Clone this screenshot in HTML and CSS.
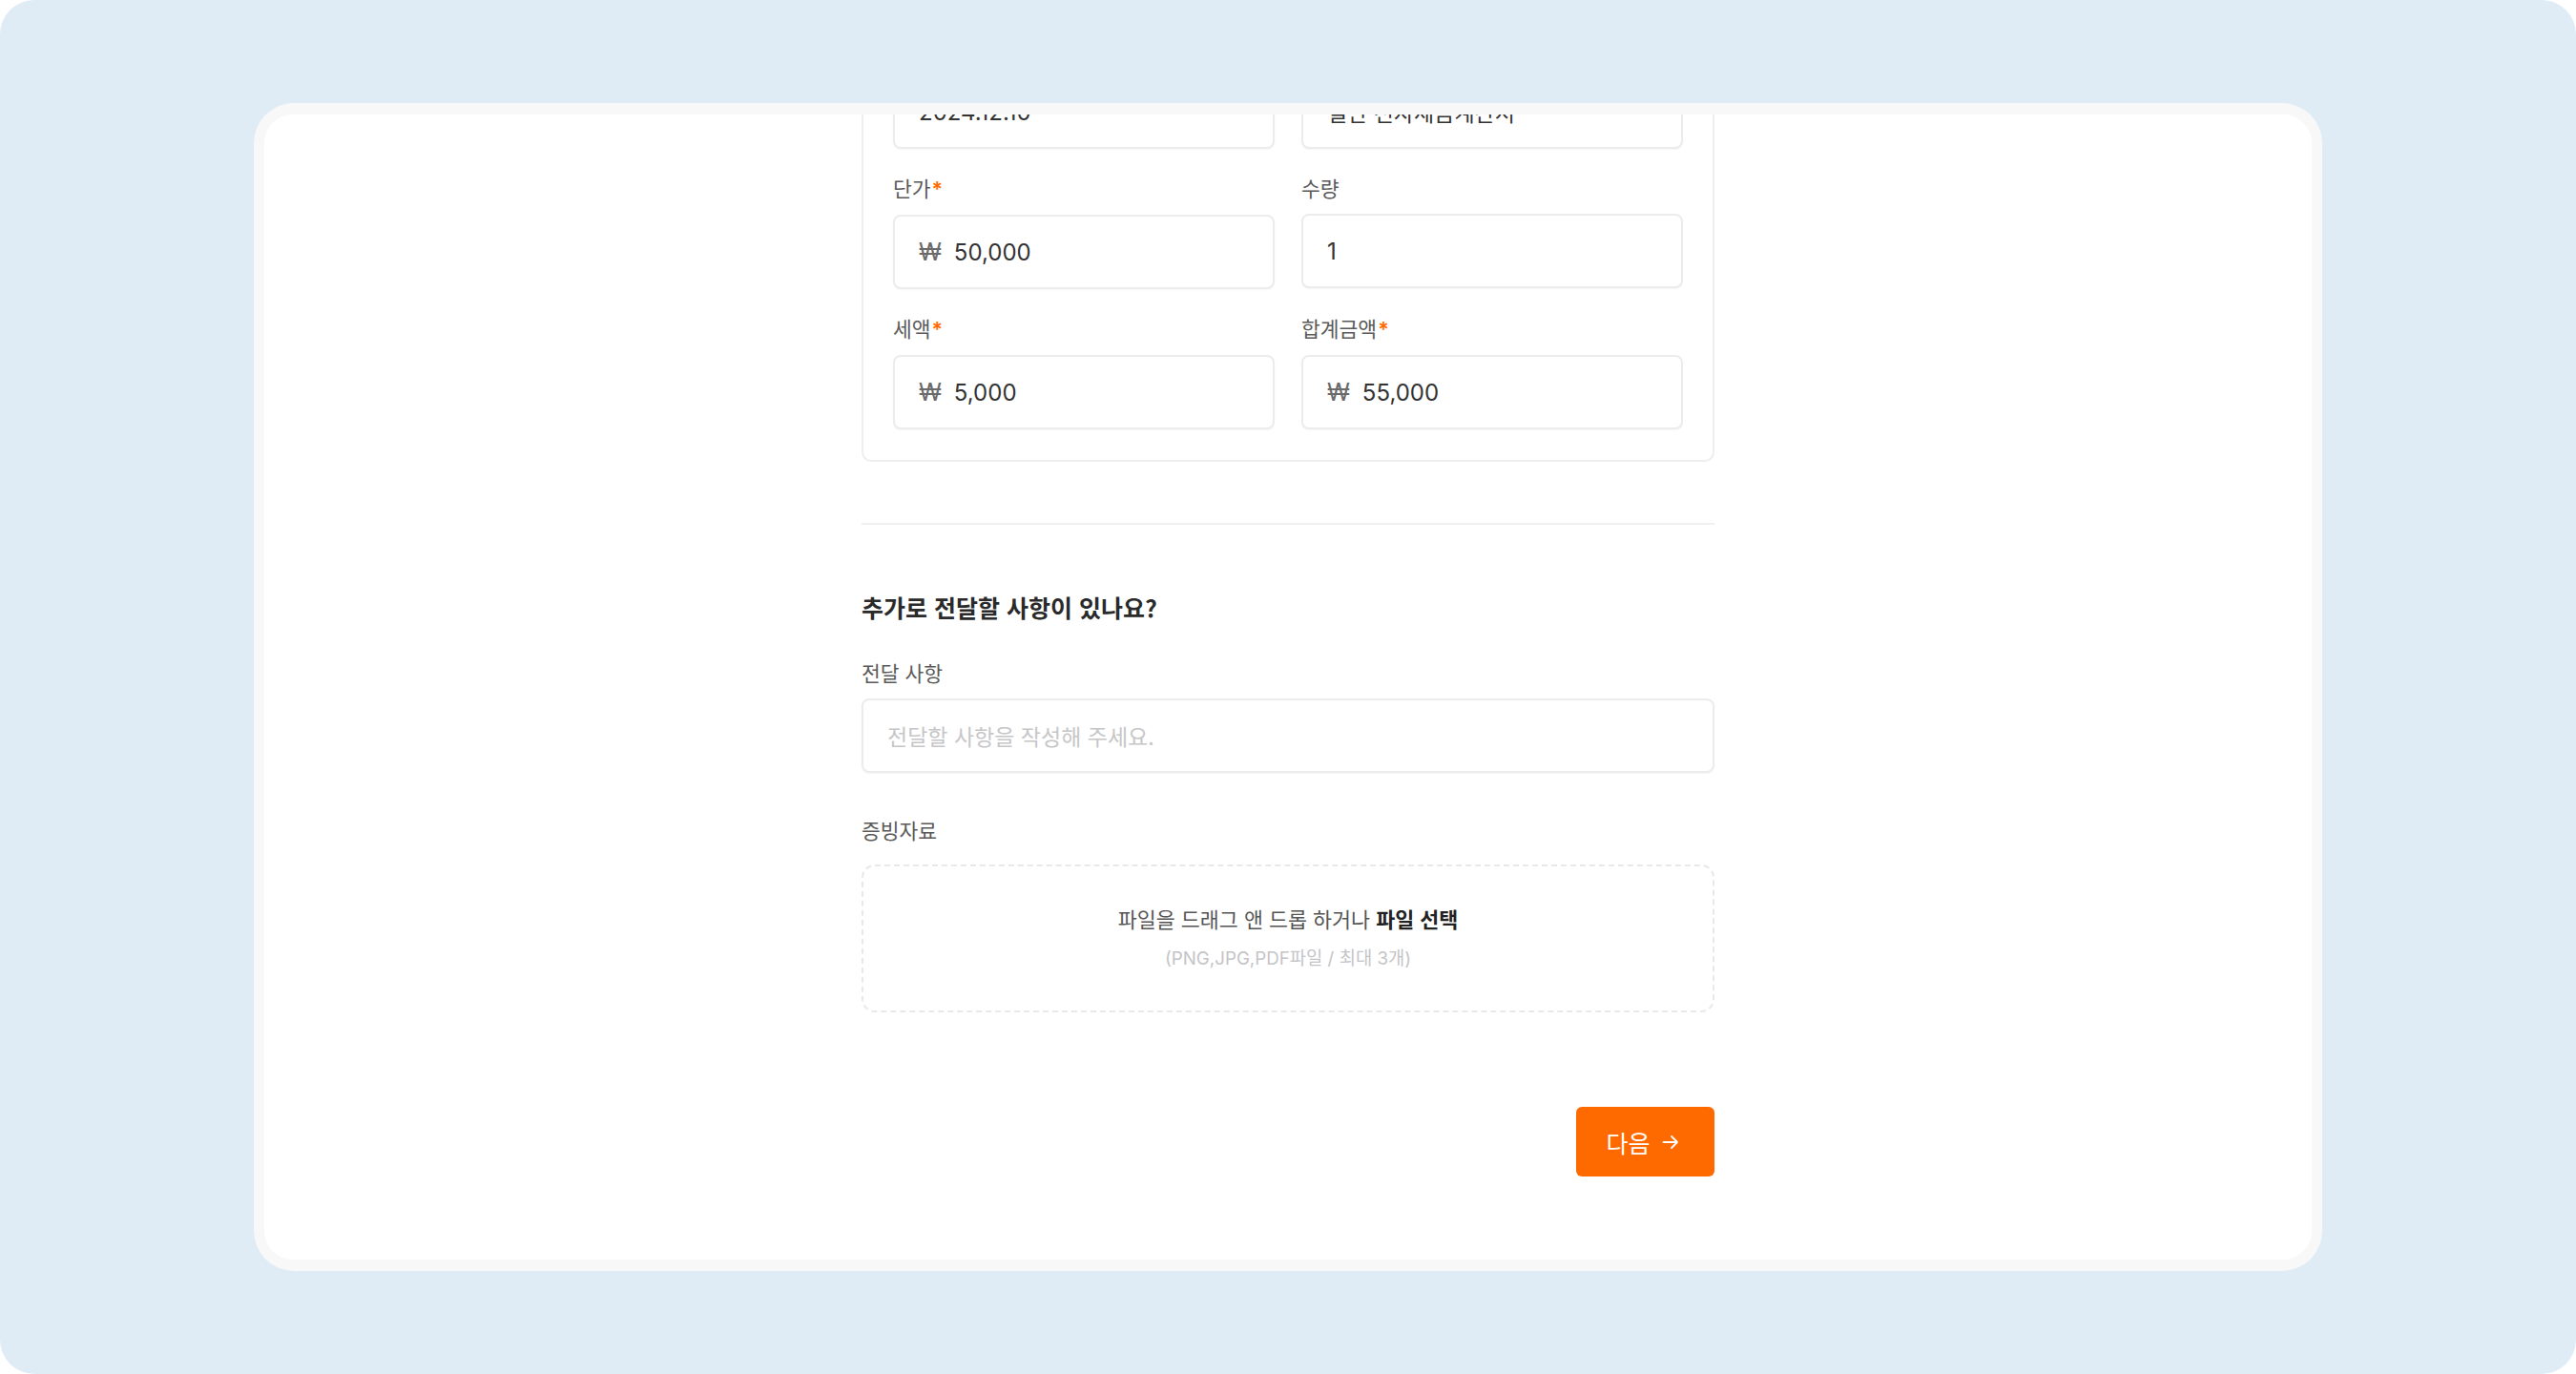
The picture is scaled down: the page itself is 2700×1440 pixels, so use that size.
FILE: index.html
```html
<!DOCTYPE html>
<html lang="ko">
<head>
<meta charset="utf-8">
<title>증빙 정보 입력</title>
<link rel="stylesheet" href="styles.css">
</head>
<body>
<div class="page">
  <div class="card">
    <div class="card-inner">
      <div class="content">
        <section class="item-box">
          <div class="grid">
            <div class="field">
              <div class="label">작성일자<span class="req">*</span></div>
              <div class="box"><span class="value">2024.12.10</span></div>
            </div>
            <div class="field">
              <div class="label">증빙유형<span class="req">*</span></div>
              <div class="box"><span class="value kr">일반 전자세금계산서</span></div>
            </div>
            <div class="field">
              <div class="label">단가<span class="req">*</span></div>
              <div class="box"><span class="won">₩</span><span class="value">50,000</span></div>
            </div>
            <div class="field">
              <div class="label">수량</div>
              <div class="box"><span class="value">1</span></div>
            </div>
            <div class="field">
              <div class="label">세액<span class="req">*</span></div>
              <div class="box"><span class="won">₩</span><span class="value">5,000</span></div>
            </div>
            <div class="field">
              <div class="label">합계금액<span class="req">*</span></div>
              <div class="box"><span class="won">₩</span><span class="value">55,000</span></div>
            </div>
          </div>
        </section>

        <hr class="divider">

        <h2 class="heading">추가로 전달할 사항이 있나요?</h2>

        <div class="label memo-label">전달 사항</div>
        <div class="box memo"><span class="placeholder">전달할 사항을 작성해 주세요.</span></div>

        <div class="label file-label">증빙자료</div>
        <div class="dropzone">
          <div class="drop-main">파일을 드래그 앤 드롭 하거나 <strong>파일 선택</strong></div>
          <div class="drop-sub">(PNG,JPG,PDF파일 / 최대 3개)</div>
        </div>

        <div class="actions">
          <button class="next-btn" type="button">
            <span>다음</span>
            <svg class="arrow" width="22" height="22" viewBox="0 0 22 22" fill="none">
              <path d="M3.5 11h14.5M12 5l6 6-6 6" stroke="#ffffff" stroke-width="1.8" stroke-linecap="round" stroke-linejoin="round"/>
            </svg>
          </button>
        </div>
      </div>
    </div>
  </div>
</div>
</body>
</html>
```

FILE: styles.css
```css
* {
  box-sizing: border-box;
}

html, body {
  margin: 0;
  padding: 0;
  background: #ffffff;
}

body {
  font-family: "Inter", "Noto Sans CJK KR", sans-serif;
  color: #333333;
}

.page {
  width: 2700px;
  height: 1440px;
  background: #dfebf5;
  border-radius: 36px;
  padding-top: 108px;
  overflow: hidden;
}

.card {
  width: 2168px;
  height: 1224px;
  margin: 0 auto;
  background: #f8f8f8;
  border-radius: 42px;
  padding: 12px 11px;
}

.card-inner {
  height: 1200px;
  background: #ffffff;
  border-radius: 30px;
  overflow: hidden;
}

.content {
  width: 894px;
  margin: -120px auto 0;
}

.item-box {
  border: 2px solid #eeeeee;
  border-radius: 10px;
  padding: 32px 31px;
}

.grid {
  display: grid;
  grid-template-columns: 1fr 1fr;
  column-gap: 28px;
  row-gap: 25px;
}

.label {
  font-family: "Noto Sans CJK KR", sans-serif;
  font-size: 21.5px;
  line-height: 32px;
  color: #5a5a5a;
  margin-bottom: 11px;
}

.req {
  color: #ff6a00;
  font-family: "Inter", sans-serif;
  font-weight: 600;
  margin-left: 1px;
}

.box {
  height: 78px;
  border: 2px solid #ececec;
  border-radius: 8px;
  box-shadow: 0 1px 2px rgba(0, 0, 0, 0.04);
  display: flex;
  align-items: center;
  padding: 0 25px;
  background: #ffffff;
}

.won {
  font-family: "Inter", sans-serif;
  font-size: 25px;
  color: #6a6a6a;
  margin-right: 13px;
}

.value {
  font-family: "Inter", sans-serif;
  font-size: 24px;
  color: #333333;
}

.value.kr {
  font-family: "Noto Sans CJK KR", sans-serif;
  font-size: 23px;
}

.divider {
  border: 0;
  height: 2px;
  background: #f0f0f0;
  margin: 64px 0 0;
}

.heading {
  font-family: "Noto Sans CJK KR", sans-serif;
  font-size: 25px;
  line-height: 36px;
  font-weight: 700;
  color: #2a2a2a;
  margin: 68px 0 0;
}

.memo-label {
  margin-top: 35px;
}

.memo {
  padding: 0 25px;
}

.placeholder {
  font-family: "Noto Sans CJK KR", sans-serif;
  font-size: 23px;
  color: #c6c6c8;
}

.file-label {
  margin-top: 44px;
  margin-bottom: 20px;
}

.dropzone {
  height: 155px;
  border: 2px dashed #e8e8e8;
  border-radius: 14px;
  padding-top: 40px;
  text-align: center;
}

.drop-main {
  font-family: "Noto Sans CJK KR", sans-serif;
  font-size: 21.75px;
  line-height: 30px;
  color: #555555;
}

.drop-main strong {
  font-weight: 700;
  color: #222222;
}

.drop-sub {
  font-family: "Inter", "Noto Sans CJK KR", sans-serif;
  font-size: 18.75px;
  line-height: 26px;
  color: #c4c4c8;
  margin-top: 14px;
}

.actions {
  display: flex;
  justify-content: flex-end;
  margin-top: 99px;
}

.next-btn {
  width: 145px;
  height: 73px;
  border: 0;
  border-radius: 6px;
  background: #ff6a00;
  color: #ffffff;
  display: flex;
  align-items: center;
  justify-content: center;
  gap: 10px;
  padding: 0 4px 0 0;
  font-family: "Noto Sans CJK KR", sans-serif;
  font-size: 25px;
  cursor: pointer;
}

.arrow {
  display: block;
}
```
